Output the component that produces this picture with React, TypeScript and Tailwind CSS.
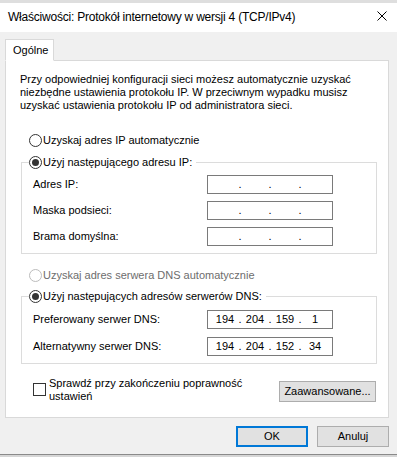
import React from "react";

const FONT = { fontFamily: '"Liberation Sans", Arial, sans-serif' };

function Radio({ checked = false, disabled = false }: { checked?: boolean; disabled?: boolean }) {
  return (
    <span
      className={`flex h-[13px] w-[13px] shrink-0 items-center justify-center rounded-full border bg-white ${
        disabled ? "border-[#bcbcbc]" : "border-[#333333]"
      }`}
    >
      {checked && <span className="h-[7px] w-[7px] rounded-full bg-[#333333]" />}
    </span>
  );
}

function RadioRow({ label, checked, disabled }: { label: string; checked?: boolean; disabled?: boolean }) {
  return (
    <div className="flex h-[15px] items-center">
      <Radio checked={checked} disabled={disabled} />
      <span className={`ml-[1px] whitespace-nowrap leading-[15px] ${disabled ? "text-[#6d6d6d]" : "text-black"}`}>{label}</span>
    </div>
  );
}

function IpField({ parts = ["", "", "", ""] }: { parts?: string[] }) {
  return (
    <div className="flex h-[19px] w-[126px] items-center border border-[#7a7a7a] bg-white pl-[4px] leading-[17px]">
      {parts.map((p, i) => (
        <React.Fragment key={i}>
          {i > 0 && <span className="w-[4px] text-center">.</span>}
          <span className="w-[26px] text-center">{p}</span>
        </React.Fragment>
      ))}
    </div>
  );
}

function FieldRow({ label, parts }: { label: string; parts?: string[] }) {
  return (
    <div className="flex h-[19px] items-center">
      <span className="w-[174px]">{label}</span>
      <IpField parts={parts} />
    </div>
  );
}

function Group({ label, children }: { label: string; children: React.ReactNode }) {
  return (
    <fieldset className="ml-[1px] w-[356px] border border-[#dcdcdc]">
      <legend className="ml-[7px] pr-[4px]">
        <RadioRow label={label} checked />
      </legend>
      {children}
    </fieldset>
  );
}

export default function App() {
  return (
    <div className="flex h-[457px] w-[397px] flex-col overflow-hidden bg-[#f0f0f0] text-[11px] text-black" style={FONT}>
      <div className="h-[3px] bg-[#dedede]" />

      {/* pasek tytułu */}
      <div className="flex h-[29px] items-center justify-between bg-white pl-[8px] pr-[10px]">
        <span className="-mt-[1px] whitespace-nowrap text-[12px] tracking-[-0.22px]">
          Właściwości: Protokół internetowy w wersji 4 (TCP/IPv4)
        </span>
        <svg width="10" height="10" viewBox="0 0 10 10" className="-mt-[3px]">
          <path d="M0.5 0.5 L9.5 9.5 M9.5 0.5 L0.5 9.5" stroke="#000" strokeWidth="1" />
        </svg>
      </div>

      <div className="px-[5px] pt-[7px]">
        <div className="flex">
          <div className="relative z-10 -mb-px flex h-[22px] w-[49px] items-center border border-b-white border-[#d9d9d9] bg-white pl-[7px]">
            Ogólne
          </div>
        </div>

        <div className="h-[358px] w-[384px] border border-[#d9d9d9] bg-white pl-[14px] pr-[12px] pt-[12px]">
          <p className="whitespace-nowrap leading-[13px]">
            Przy odpowiedniej konfiguracji sieci możesz automatycznie uzyskać
            <br />
            niezbędne ustawienia protokołu IP. W przeciwnym wypadku musisz
            <br />
            uzyskać ustawienia protokołu IP od administratora sieci.
          </p>

          <div className="ml-[9px] mt-[21px]">
            <RadioRow label="Uzyskaj adres IP automatycznie" />
          </div>

          <div className="mt-[7px]">
            <Group label="Użyj następującego adresu IP:">
              <div className="flex flex-col gap-[7px] pb-[7px] pl-[11px] pt-[5px]">
                <FieldRow label="Adres IP:" />
                <FieldRow label="Maska podsieci:" />
                <FieldRow label="Brama domyślna:" />
              </div>
            </Group>
          </div>

          <div className="ml-[9px] mt-[14px]">
            <RadioRow label="Uzyskaj adres serwera DNS automatycznie" disabled />
          </div>

          <div className="mt-[6px]">
            <Group label="Użyj następujących adresów serwerów DNS:">
              <div className="flex flex-col gap-[8px] pb-[7px] pl-[11px] pt-[6px]">
                <FieldRow label="Preferowany serwer DNS:" parts={["194", "204", "159", "1"]} />
                <FieldRow label="Alternatywny serwer DNS:" parts={["194", "204", "152", "34"]} />
              </div>
            </Group>
          </div>

          <div className="mt-[13px] flex items-start">
            <span className="ml-[13px] mt-[6px] h-[13px] w-[13px] shrink-0 border border-[#333333] bg-white" />
            <span className="ml-[3px] whitespace-nowrap leading-[13px]">
              Sprawdź przy zakończeniu poprawność
              <br />
              ustawień
            </span>
            <button className="ml-auto mt-[4px] flex h-[21px] w-[97px] items-center justify-center border border-[#adadad] bg-[#e1e1e1]">
              Zaawansowane...
            </button>
          </div>
        </div>
      </div>

      <div className="mt-[8px] flex justify-end gap-[9px] pr-[8px]">
        <button className="flex h-[21px] w-[72px] items-center justify-center border-2 border-[#0078d7] bg-[#e1e1e1]">
          OK
        </button>
        <button className="flex h-[21px] w-[72px] items-center justify-center border border-[#adadad] bg-[#e1e1e1]">
          Anuluj
        </button>
      </div>

      <div className="mt-[7px] h-[1px] bg-[#8a8a8a]" />
      <div className="h-[2px] bg-[#d6d6d6]" />
    </div>
  );
}
